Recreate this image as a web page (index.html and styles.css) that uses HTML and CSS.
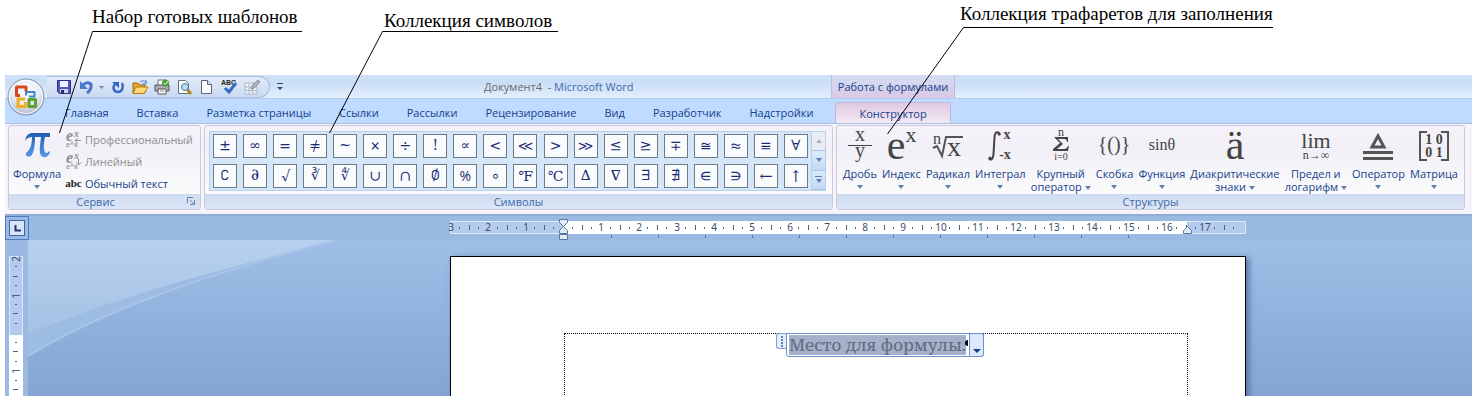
FILE: index.html
```html
<!DOCTYPE html>
<html lang="ru">
<head>
<meta charset="utf-8">
<title>Документ4 - Microsoft Word</title>
<link rel="stylesheet" href="styles.css">
</head>
<body>
<div class="figure">
  <p class="note note-1">Набор готовых шаблонов</p>
  <p class="note note-2">Коллекция символов</p>
  <p class="note note-3">Коллекция трафаретов для заполнения</p>
  <svg class="leaders" width="1476" height="170" aria-hidden="true">
    <path d="M302 31.500H92.500L59.500 133M558 31.500H382.500L329.500 133M1273 27.500H963.500L887.500 134" fill="none" stroke="#000"/>
  </svg>

  <main class="app">
    <header class="titlebar">
      <nav class="qat" aria-label="Панель быстрого доступа">
        <button aria-label="Сохранить"><svg width="16" height="16"><path d="M1.500 1.500h13v13h-11l-2-2z" fill="#5956c4" stroke="#302c83"/><path d="M4 2h8v6H4z" fill="#edf2ff"/><path d="M4 10h8v4H4z" fill="#cbd3e6"/><path d="M5 11h3v3H5z" fill="#29296b"/></svg></button>
        <button aria-label="Отменить"><svg width="16" height="16"><path d="M5 6c4-4 9-2 8 2-.500 3-2.500 5-4 6" fill="none" stroke="#4a76cc" stroke-width="3"/><path d="M2 2v8h8z" fill="#4c7bd4"/></svg></button>
        <button class="narrow" aria-label="Список отмены"><svg width="7" height="16"><path d="M1 7h5L3.500 10z" fill="#7184a8"/></svg></button>
        <button aria-label="Повторить"><svg width="16" height="16"><path d="M5 5c-3 4-1 8 3 8s6-5 4-9" fill="none" stroke="#3a69c9" stroke-width="2.500"/><path d="M2 3h7v6z" fill="#3263c5"/></svg></button>
        <button aria-label="Открыть"><svg width="16" height="16"><path d="M1 4h5l1 2h6v8H1z" fill="#e7a72d" stroke="#a76d12"/><path d="M4 8h12l-4 6.500H1z" fill="#ffd978" stroke="#b77b16"/><path d="M8 3c3-2 5-1 6 1m0-3v4h-4" fill="none" stroke="#4c77b9"/></svg></button>
        <button aria-label="Печать"><svg width="16" height="16"><path d="M4 1h8v7H4z" fill="#fff" stroke="#777"/><path d="M1 6h14v6H1z" fill="#aaafb5" stroke="#50565e"/><path d="M4 10h8v5H4z" fill="#fff" stroke="#555"/><path d="M6 12h4" stroke="#888"/><circle cx="11.500" cy="4" r="3.500" fill="#45a03a"/><path d="m10 4 1.500 1.500L14 2" fill="none" stroke="#fff"/></svg></button>
        <button aria-label="Просмотр"><svg width="16" height="16"><path d="M2.500 1.500h7l3 3v10h-10z" fill="#fff" stroke="#63738a"/><circle cx="9" cy="8" r="3.500" fill="#b9ddf7" stroke="#53799b"/><path d="m11.500 11 3.500 4" stroke="#ad8c14" stroke-width="3"/></svg></button>
        <button aria-label="Создать"><svg width="16" height="16"><path d="M3.500 1.500h6l4 4v9h-10z" fill="#fff" stroke="#56647d"/><path d="M9.500 1.500v4h4" fill="#dce5f3" stroke="#56647d"/></svg></button>
        <button aria-label="Правописание"><svg width="18" height="18"><text x="1" y="7" class="abc-tiny">ABC</text><path d="m5 10 4 4 7-9" fill="none" stroke="#386bc3" stroke-width="3"/></svg></button>
        <button aria-label="Нарисовать таблицу"><svg width="16" height="16"><path d="M1 4h12v11H1zM1 8h12M1 11.500h12M5 4v11M9 4v11" fill="#eef1f5" stroke="#afb9c8"/><path d="m7 10 1-3 6-6 2 2-6 6z" fill="#b0b7c1" stroke="#818b99"/></svg></button>
      </nav>
      <button class="qat-more" aria-label="Настройка панели"><svg width="8" height="10"><path d="M1 1.500h6" stroke="#31486f"/><path d="M1 5h6L4 8z" fill="#31486f"/></svg></button>
      <h1 class="doc-title"><span>Документ4 &nbsp;-</span> Microsoft Word</h1>
      <div class="context-title">Работа с формулами</div>
    </header>
    <button class="office" aria-label="Office">
      <svg width="38" height="38" viewBox="0 0 38 38">
        <defs><radialGradient id="orb" cx=".5" cy=".3" r=".7"><stop offset="0" stop-color="#fff"/><stop offset=".6" stop-color="#e3e8f0"/><stop offset="1" stop-color="#a9b6cc"/></radialGradient></defs>
        <circle cx="19" cy="19" r="18" fill="url(#orb)" stroke="#8193b4"/>
        <circle cx="19" cy="19" r="16.500" fill="none" stroke="#fff"/>
        <g fill="none" stroke-linejoin="round">
          <path d="M13 17.500H9.500V9H19v4.500" stroke="#d9481c" stroke-width="3"/>
          <path d="M19 17.500V14h8.500v4.500H22" stroke="#3b86cd" stroke-width="2"/>
          <path d="M18.500 24v4.500H11V21h7" stroke="#f2b01e" stroke-width="3"/>
          <path d="M22 21.500h6.500v7H22z" stroke="#5fa12d" stroke-width="3"/>
        </g>
      </svg>
    </button>

    <nav class="tabs" aria-label="Лента">
      <a href="#">Главная</a><a href="#">Вставка</a><a href="#">Разметка страницы</a><a href="#">Ссылки</a><a href="#">Рассылки</a><a href="#">Рецензирование</a><a href="#">Вид</a><a href="#">Разработчик</a><a href="#">Надстройки</a><a href="#" class="active">Конструктор</a>
    </nav>

    <div class="ribbon">
      <section class="group service">
        <div class="group-body">
          <button class="big formula">
            <svg width="32" height="32" viewBox="0 0 32 32"><defs><linearGradient id="pi" x2="0" y2="1"><stop stop-color="#1f5cb4"/><stop offset="1" stop-color="#5b9ae8"/></linearGradient></defs><path d="M4 11C5 5 8 3 12 3h17v4h-5c-1 6-2 11 0 15 1 2 3 1 4-1l1 1c-1 4-4 6-7 5-5-2-3-10-2-20h-6c0 8-1 16-4 19-3 2-6 0-5-3 4-3 6-8 6-16-3 0-5 1-7 4z" fill="url(#pi)"/></svg>
            <span>Формула</span><i class="arrow"></i>
          </button>
          <div class="modes">
            <button disabled><svg width="17" height="18"><text x="1" y="11" class="mode-e">e</text><text x="9" y="7" class="mode-x">x</text><path d="M10 10.500h6M12.500 8l-2.500 2.500 2.500 2.500" fill="none" stroke="#8c8f99"/><text x="1" y="17" class="mode-s">e^x</text></svg>Профессиональный</button>
            <button disabled><svg width="17" height="18"><text x="1" y="11" class="mode-e">e</text><text x="9" y="7" class="mode-x">x</text><path d="M13.500 7v6M11 10.500l2.500 2.500 2.500-2.500" fill="none" stroke="#8c8f99"/><text x="1" y="17" class="mode-s">e^x</text></svg>Линейный</button>
            <button><b class="abc">abc</b>Обычный текст</button>
          </div>
        </div>
        <h2>Сервис<svg class="launcher" width="8" height="8"><path d="M.500 6V.500H6M3 3l4 4M7.500 3v4.500H3" fill="none" stroke="#6783b0"/></svg></h2>
      </section>

      <section class="group symbols">
        <div class="gallery">
          <div class="cells">
            <button>±</button><button>∞</button><button>=</button><button>≠</button><button>~</button><button>×</button><button>÷</button><button>!</button><button>∝</button><button>&lt;</button><button>≪</button><button>&gt;</button><button>≫</button><button>≤</button><button>≥</button><button>∓</button><button>≅</button><button>≈</button><button>≡</button><button>∀</button>
            <button>∁</button><button>∂</button><button>√</button><button>∛</button><button>∜</button><button>∪</button><button>∩</button><button>∅</button><button class="sans">%</button><button>∘</button><button class="serif">℉</button><button class="serif">℃</button><button>∆</button><button>∇</button><button>∃</button><button>∄</button><button>∈</button><button>∋</button><button>←</button><button>↑</button>
          </div>
          <div class="scroll">
            <button disabled aria-label="Вверх"><i class="arrow up"></i></button>
            <button aria-label="Вниз"><i class="arrow"></i></button>
            <button class="more" aria-label="Ещё"><i class="arrow"></i></button>
          </div>
        </div>
        <h2>Символы</h2>
      </section>

      <section class="group structures">
        <div class="group-body">
          <button class="big"><svg width="30" height="32"><text x="15" y="11" class="m m20">x</text><path d="M3 15.500h24" stroke="#444"/><text x="15" y="27" class="m m20">y</text></svg><span>Дробь</span><i class="arrow"></i></button>
          <button class="big"><svg width="32" height="32"><text x="11" y="29" class="m m42">e</text><text x="26" y="12" class="m m22">x</text></svg><span>Индекс</span><i class="arrow"></i></button>
          <button class="big"><svg width="32" height="32"><text x="5" y="14" class="m m16">n</text><path d="M1 18l4-2 5 10 4-19h17" fill="none" stroke="#555" stroke-width="2"/><text x="22" y="26" class="m m28">x</text></svg><span>Радикал</span><i class="arrow"></i></button>
          <button class="big"><svg width="32" height="32"><path d="M16 5C15 1 11 1 10.500 7L9.500 24C9 30 6 31 5 28" fill="none" stroke="#444" stroke-width="2"/><circle cx="15" cy="4" r="1.500" fill="#444"/><circle cx="6" cy="28" r="1.500" fill="#444"/><text x="23" y="9" class="m m14">x</text><text x="21" y="29" class="m m14">-x</text></svg><span>Интеграл</span><i class="arrow"></i></button>
          <button class="big"><svg width="32" height="32"><text x="16" y="6" class="m m12">n</text><path d="M9 7h14v5h-1c0-2-1-3-3-3h-6l5 5-6 5h7c2 0 3-1 4-3h1l-1 5H8v-2l7-6-6-6z" fill="#444"/><text x="16" y="30" class="m m10">i=0</text></svg><span>Крупный<br>оператор <i class="arrow"></i></span></button>
          <button class="big"><svg width="32" height="32"><text x="16" y="21" class="m m20">{()}</text></svg><span>Скобка</span><i class="arrow"></i></button>
          <button class="big"><svg width="32" height="32"><text x="16" y="20" class="m m16">sinθ</text></svg><span>Функция</span><i class="arrow"></i></button>
          <button class="big"><svg width="32" height="32"><text x="16" y="29" class="m m42">ä</text></svg><span>Диакритические<br>знаки <i class="arrow"></i></span></button>
          <button class="big"><svg width="32" height="32"><text x="16" y="18" class="m m22">lim</text><text x="16" y="29" class="m m12">n→∞</text></svg><span>Предел и<br>логарифм <i class="arrow"></i></span></button>
          <button class="big"><svg width="32" height="32"><path d="M10 17 16 6l6 11z" fill="none" stroke="#555" stroke-width="3"/><path d="M1 22.500h30M1 28.500h30" stroke="#555" stroke-width="3"/></svg><span>Оператор</span><i class="arrow"></i></button>
          <button class="big"><svg width="32" height="32"><path d="M9 2H2v28h7M23 2h7v28h-7" fill="none" stroke="#555" stroke-width="2"/><text x="16" y="14" class="m m14">1 0</text><text x="16" y="27" class="m m14">0 1</text></svg><span>Матрица</span><i class="arrow"></i></button>
        </div>
        <h2>Структуры</h2>
      </section>
    </div>

    <div class="ruler-row">
      <button class="tab-stop" aria-label="Табуляция"><span><svg width="7" height="7"><path d="M1.500 0v5.500H7" fill="none" stroke="#20396d" stroke-width="2"/></svg></span></button>
      <svg class="ruler" width="800" height="22">
        <defs><path id="cm" d="M9.500 8v2M19.500 6v5M28.500 8v2" stroke="#50617f"/></defs>
        <path d="M.500 2.500h795v12H.500z" fill="#b4cbee" stroke="#dceaff"/>
        <path d="M113 2h624v13H113z" fill="#fff"/>
        <use href="#cm" x="0"/><use href="#cm" x="38"/><use href="#cm" x="75"/><use href="#cm" x="113"/><use href="#cm" x="151"/><use href="#cm" x="188"/><use href="#cm" x="226"/><use href="#cm" x="264"/><use href="#cm" x="302"/><use href="#cm" x="339"/><use href="#cm" x="377"/><use href="#cm" x="415"/><use href="#cm" x="453"/><use href="#cm" x="490"/><use href="#cm" x="528"/><use href="#cm" x="566"/><use href="#cm" x="604"/><use href="#cm" x="641"/><use href="#cm" x="679"/><use href="#cm" x="717"/><use href="#cm" x="755"/>
        <path d="M161.500 16v3m47-3v3m47-3v3m47-3v3m47-3v3m47-3v3m47-3v3m47-3v3m47-3v3m47-3v3m47-3v3m47-3v3" stroke="#587bae"/>
        <g class="nums"><text x="1" y="12">3</text><text x="38" y="12">2</text><text x="76" y="12">1</text><text x="151" y="12">1</text><text x="189" y="12">2</text><text x="227" y="12">3</text><text x="264" y="12">4</text><text x="302" y="12">5</text><text x="340" y="12">6</text><text x="377" y="12">7</text><text x="415" y="12">8</text><text x="453" y="12">9</text><text x="491" y="12">10</text><text x="528" y="12">11</text><text x="566" y="12">12</text><text x="604" y="12">13</text><text x="642" y="12">14</text><text x="679" y="12">15</text><text x="717" y="12">16</text><text x="755" y="12">17</text></g>
        <path d="M109.500.500h8v3l-4 4 4 4v3h-8v-3l4-4-4-4zM109.500 15.500h8v5h-8zM733.500 14.500v-3l4-4 4 4v3z" fill="#e1ecfb" stroke="#58789f"/>
      </svg>
    </div>

    <div class="workspace">
      <svg class="vruler" width="14" height="140">
        <path d="M.500.500h13V140H.500z" fill="#b4cbee" stroke="#dceaff"/><path d="M0 79h14v61H0z" fill="#fff"/>
        <path d="M6 10.500h2M4 20.500h5M6 29.500h2M6 48.500h2M4 57.500h5M6 67.500h2M6 86.500h2M4 95.500h5M6 105.500h2M6 124.500h2M4 133.500h5" stroke="#50617f"/>
        <g class="nums"><text transform="translate(11 3) rotate(-90)">2</text><text transform="translate(11 40) rotate(-90)">1</text><text transform="translate(11 115) rotate(-90)">1</text></g>
      </svg>
      <div class="canvas">
        <svg class="swoosh" width="420" height="156" aria-hidden="true"><defs><linearGradient id="wave" x2="0" y2="1"><stop stop-color="#b7d0ef"/><stop offset="1" stop-color="#a5c2e4"/></linearGradient></defs><path d="M0 0h309C190 30 75 70 0 116z" fill="#9dbce2"/><path d="M0 0h309C190 30 95 55 0 94z" fill="url(#wave)"/><path d="M309 0C190 30 75 70 0 116" fill="none" stroke="#a7c4e9" stroke-width="2"/></svg>
        <article class="page">
          <div class="text-area">
            <div class="equation"><span class="grip"></span><span class="field"><mark>Место для формулы.</mark><i class="caret-end"></i></span><button aria-label="Параметры формулы"><i class="arrow"></i></button></div>
          </div>
        </article>
      </div>
    </div>
  </main>
</div>
</body>
</html>
```
FILE: styles.css
```css
* { box-sizing: border-box; }
body { margin: 0; background: #fff; font: 11px/15px "Open Sans", "Noto Sans", sans-serif; color: #15428b; }
button { margin: 0; padding: 0; border: 0; background: none; font: inherit; color: inherit; }
svg { display: block; flex: none; overflow: visible; }
h1, h2, p { margin: 0; font-weight: 400; }

.figure { position: relative; padding: 75px 4px 4px 5px; overflow: hidden; }
.note { position: absolute; font: 19px/22px "Liberation Serif", serif; color: #000; white-space: nowrap; }
.note-1 { left: 92px; top: 6px; }
.note-2 { left: 384px; top: 10px; }
.note-3 { left: 960px; top: 3px; }
.leaders { position: absolute; left: 0; top: 0; z-index: 5; pointer-events: none; }

.app { position: relative; }
.titlebar { display: flex; align-items: center; height: 24px; background: linear-gradient(#cfe0f7, #cadef7 35%, #e4effd); border-bottom: 1px solid #b0cbef; }
.qat { display: flex; align-items: center; gap: 6px; height: 22px; margin-left: 42px; padding: 0 9px; border: 1px solid #a9bfdf; border-left: 0; border-radius: 0 11px 11px 0; background: linear-gradient(#e2ecfa, #c9daf1); }
.qat .narrow { margin: 0 -1px 0 -2px; }
.abc-tiny { font: bold 7px "Liberation Sans", sans-serif; fill: #222; }
.qat-more { margin-left: 6px; }
.doc-title { flex: 1; padding-left: 200px; font-size: 11px; line-height: 15px; color: #3e6aaa; }
.doc-title span { color: #696969; }
.context-title { width: 124px; margin-right: 517px; height: 23px; line-height: 23px; text-align: center; white-space: nowrap; border: 1px solid #b7bcdc; border-width: 0 1px; background: linear-gradient(#d3def5, #d9c8e4); }
.office { position: absolute; left: 2px; top: 3px; z-index: 2; }

.tabs { display: flex; height: 25px; padding-left: 46px; background: #bfdbff; border-bottom: 1px solid #a6bfe4; }
.tabs a { padding: 0 14px; line-height: 27px; color: #15428b; text-decoration: none; white-space: nowrap; }
.tabs .active { margin-left: 8px; padding: 0 23px; margin-top: 3px; line-height: 22px; border: 1px solid #c3b5d6; border-bottom: 0; border-radius: 3px 3px 0 0; background: linear-gradient(#e0c8e2, #f3eaf5); }

.ribbon { display: flex; gap: 3px; height: 92px; padding: 1px 7px 4px 3px; background: #f6f4fa; border-bottom: 2px solid #8fadd5; }
.group { display: flex; flex-direction: column; border: 1px solid #c9c9dc; border-radius: 3px; background: linear-gradient(#f6f2f9, #f1f0f6 30%, #fff); }
.group h2 { position: relative; height: 15px; margin-top: auto; font-size: 11px; line-height: 15px; text-align: center; color: #3e6aaa; background: linear-gradient(#cfdcf0, #dbe5f5); }
.launcher { position: absolute; right: 5px; top: 3px; }
.service { flex: 0 0 193px; }
.service h2 { padding-right: 18px; }
.symbols, .structures { flex: 1 1 0; }
.group-body { display: flex; padding-top: 4px; }
.big { display: flex; flex-direction: column; align-items: center; line-height: 13px; }
.big > span { margin-top: 5px; white-space: nowrap; }
.arrow { display: inline-block; border: 3px solid transparent; border-top: 4px solid #5f7fb0; border-bottom: 0; vertical-align: middle; }
.big > .arrow { margin-top: 5px; }
.formula { width: 56px; }
.modes { display: flex; flex-direction: column; gap: 4px; }
.modes button { display: flex; align-items: center; gap: 3px; height: 18px; white-space: nowrap; }
.modes button:disabled { color: #8d8d8d; }
.abc { width: 17px; font: bold 11px "Liberation Serif", serif; color: #222; }
.mode-e { font: italic bold 16px "Liberation Serif", serif; fill: #8c8f99; }
.mode-x { font: italic bold 10px "Liberation Serif", serif; fill: #8c8f99; }
.mode-s { font: bold 7px "Liberation Sans", sans-serif; fill: #9a9da8; }

.gallery { display: flex; justify-content: space-between; height: 60px; margin: 5px 6px 0 4px; border: 1px solid #b9d0ed; background: #d4e6f8; }
.cells { flex: 1; display: grid; grid-template-columns: repeat(20, 24px); justify-content: space-between; gap: 6px 0; padding: 2px 3px; }
.cells button { height: 24px; border: 1px solid #6b7b88; background: #fafbfd; font: 14px/20px "DejaVu Math TeX Gyre", "DejaVu Sans", sans-serif; color: #182d74; overflow: hidden; }
.cells .serif { font-family: "DejaVu Serif", serif; }
.cells .sans { font-family: "Open Sans", sans-serif; }
.scroll { display: flex; flex-direction: column; width: 14px; border-left: 1px solid #b9d0ed; }
.scroll button { flex: 1; display: flex; flex-direction: column; align-items: center; justify-content: center; background: linear-gradient(#dceafc, #c2d9f5); border-bottom: 1px solid #a9c5ea; }
.scroll button:disabled { background: #e9edf3; }
.scroll .up { border-top: 0; border-bottom: 4px solid #abb0b8; }
.more::before { content: ""; width: 7px; height: 1px; margin-bottom: 2px; background: #5f7fb0; }

.structures .group-body { justify-content: space-between; padding-left: 6px; padding-right: 6px; }
.m { font-family: "Liberation Serif", serif; fill: #444; text-anchor: middle; }
.m10 { font-size: 10px; }
.m12 { font-size: 12px; }
.m14 { font-size: 14px; font-weight: 700; }
.m16 { font-size: 16px; }
.m20 { font-size: 20px; }
.m22 { font-size: 22px; }
.m28 { font-size: 28px; }
.m42 { font-size: 42px; }

.ruler-row { display: flex; height: 24px; background: #9bbae1; }
.tab-stop { width: 24px; height: 24px; padding: 3px; border: 1px solid #4f79c4; }
.tab-stop span { display: grid; place-items: center; width: 16px; height: 16px; border: 1px solid #3f66a8; background: #d6e5f9; }
.ruler { margin: 3px 0 0 421px; }
.nums { font: 10px "Noto Sans", sans-serif; fill: #3d4c66; text-anchor: middle; }

.workspace { display: flex; height: 156px; background: #9bbae1; }
.vruler { margin: 16px 5px 0 4px; overflow: hidden; }
.canvas { flex: 1; position: relative; overflow: hidden; background: linear-gradient(#9fbee7, #84a5d2); }
.swoosh { position: absolute; left: 0; top: 0; }
.page { position: relative; width: 796px; height: 200px; margin: 16px 0 0 422px; padding: 76px 57px 0 113px; border: 1px solid #000; background: #fff; box-shadow: 3px 2px 6px #5673a0; }
.text-area { display: flex; justify-content: center; height: 120px; border: 1px dotted #000; border-bottom: 0; }
.equation { display: flex; height: 24px; margin-top: -1px; margin-left: 8px; }
.grip { width: 10px; height: 16px; border: 1px solid #7e9ed6; border-right: 0; border-radius: 3px 0 0 3px; background: #e3edfc; }
.grip::before { content: ""; display: block; width: 2px; height: 11px; margin: 2px 0 0 4px; background: repeating-linear-gradient(#5f82c2 0 2px, transparent 2px 3px); }
.field { display: flex; padding: 1px 1px 1px 2px; border: 1px solid #6d90d0; border-radius: 0 0 0 3px; }
.field mark { background: #a5b0c9; color: #626a80; font: 17px/20px "Noto Serif", "Liberation Serif", serif; white-space: nowrap; }
.caret-end { width: 3px; height: 6px; margin-top: 5px; margin-left: -1px; border-radius: 3px 0 0 3px; background: #000; }
.equation button { width: 14px; padding-top: 9px; border: 1px solid #6d90d0; border-left: 0; border-radius: 0 3px 3px 0; background: #dce9fc; line-height: 8px; }
.equation .arrow { border-width: 4px 4px 0; border-top-color: #15428b; }
```
